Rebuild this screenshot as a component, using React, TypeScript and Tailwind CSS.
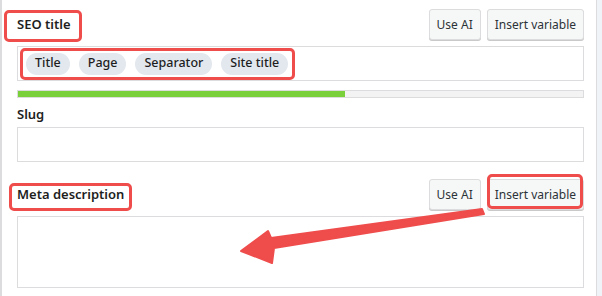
import React from "react";

const font = { fontFamily: '"Noto Sans", "Open Sans", "Liberation Sans", sans-serif' };

function Btn({ children }: { children: React.ReactNode }) {
  return (
    <button className="h-[31px] px-[7px] bg-[#f6f7f7] border border-[#dcdcde] rounded-[3px] shadow-[0_1px_0_#c9c9c9] text-[12px] text-[#2c3338] leading-none">
      {children}
    </button>
  );
}

function Pill({ children }: { children: React.ReactNode }) {
  return (
    <span className="h-[22px] px-[9px] rounded-full bg-[#e3e8ef] text-[12.5px] font-medium text-[#1e1e1e] flex items-center">
      {children}
    </span>
  );
}

export default function App() {
  return (
    <div className="relative w-[602px] h-[296px] overflow-hidden bg-[#f0f4f8]" style={font}>
      <div className="w-[597px] h-full bg-white border-l-2 border-r border-[#dcdcde] pl-[15px] pr-[12px] pt-[9px]">
        <div className="flex items-center justify-between">
          <span className="text-[13px] font-semibold text-[#1e1e1e]">SEO title</span>
          <div className="flex gap-[6px]">
            <Btn>Use AI</Btn>
            <Btn>Insert variable</Btn>
          </div>
        </div>
        <div className="mt-[6px] h-[35px] border border-[#dcdcde] flex items-center gap-[9px] pl-[8px]">
          <Pill>Title</Pill>
          <Pill>Page</Pill>
          <Pill>Separator</Pill>
          <Pill>Site title</Pill>
        </div>
        <div className="mt-[9px] h-[8px] border border-[#dcdcde] bg-[#f3f3f3]">
          <div className="h-full w-[327px] bg-[#7ad03a]" />
        </div>
        <div className="mt-[6px] h-[20px] leading-[20px] text-[13px] font-semibold text-[#1e1e1e]">Slug</div>
        <div className="mt-[3px] h-[35px] border border-[#dcdcde]" />
        <div className="mt-[17px] flex items-center justify-between">
          <span className="text-[13px] font-semibold text-[#1e1e1e]">Meta description</span>
          <div className="flex gap-[6px]">
            <Btn>Use AI</Btn>
            <Btn>Insert variable</Btn>
          </div>
        </div>
        <div className="mt-[6px] h-[72px] border border-[#dcdcde]" />
        <div className="mt-[8px] h-[35px] border border-[#dcdcde]" />
      </div>

      {/* annotations */}
      <div className="absolute left-[4px] top-[10px] w-[78px] h-[32px] border-[3px] border-[#ef4c4c] rounded-[5px]" />
      <div className="absolute left-[20px] top-[48px] w-[275px] h-[32px] border-[3px] border-[#ef4c4c] rounded-[5px]" />
      <div className="absolute left-[9px] top-[183px] w-[123px] h-[28px] border-[3px] border-[#ef4c4c] rounded-[5px]" />
      <div className="absolute left-[487px] top-[174px] w-[96px] h-[35px] border-[3px] border-[#ef4c4c] rounded-[5px]" />
      <svg className="absolute left-0 top-0" width="602" height="296" viewBox="0 0 602 296">
        <polygon
          points="241,251 268,231 271,238 482,209 484,214 274,248 272,263"
          fill="#ef4c4c"
          stroke="#ef4c4c"
          strokeWidth="2"
          strokeLinejoin="round"
        />
      </svg>
    </div>
  );
}
